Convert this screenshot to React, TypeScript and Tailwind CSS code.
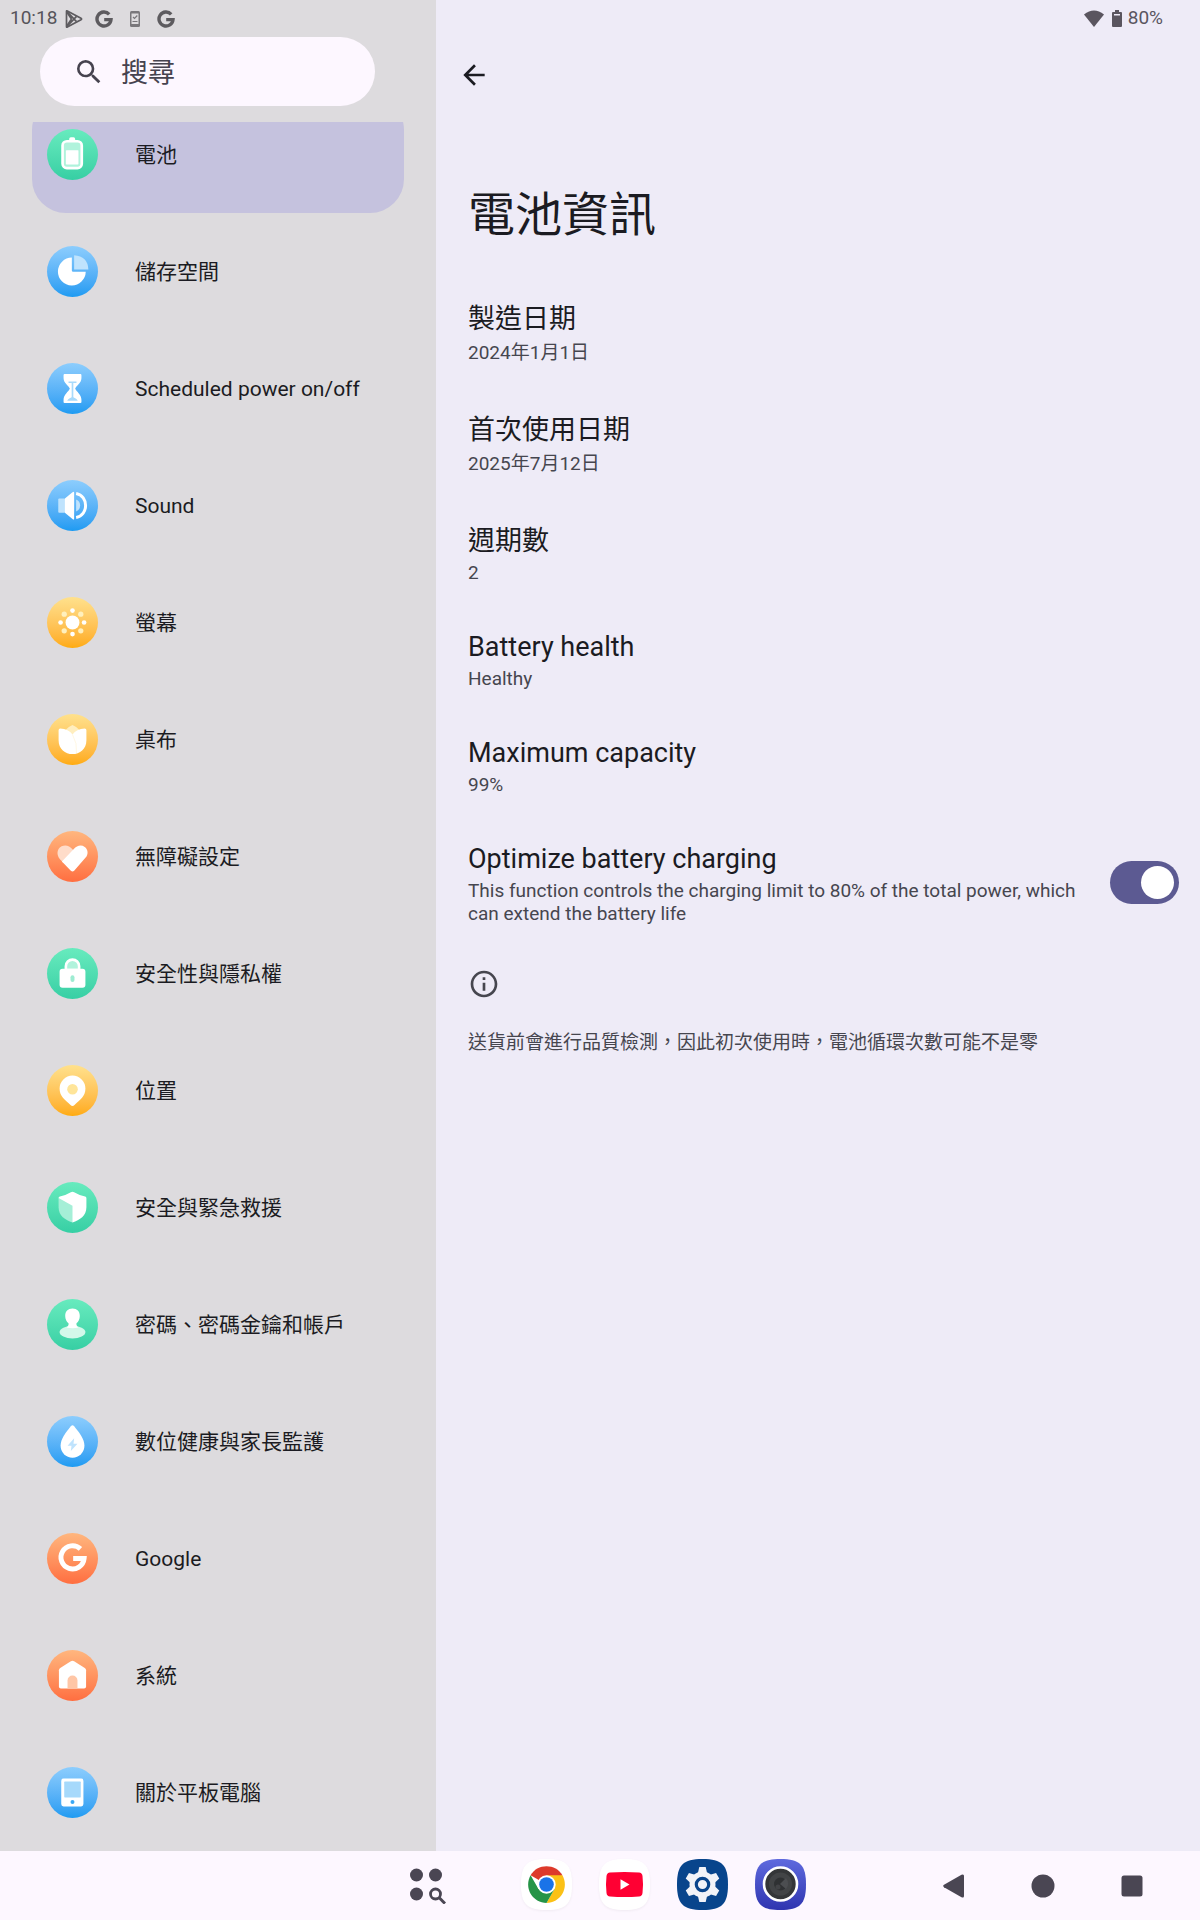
import React, { useState } from 'react';
import { MdArrowBack, MdOutlineInfo, MdSearch } from 'react-icons/md';

type Tone = 'green' | 'blue' | 'yellow' | 'orange';

interface MenuItem {
    label: string;
    tone: Tone;
    icon: React.ReactNode;
    active?: boolean;
}

interface InfoItem {
    title: string;
    value: string;
    tall?: boolean;
}

const tones: Record<Tone, string> = {
    green: 'bg-linear-to-b from-[#67ebbe] to-[#36cfa4]',
    blue: 'bg-linear-to-b from-[#8ccdfd] to-[#1c9bf2]',
    yellow: 'bg-linear-to-b from-[#ffe18c] to-[#ffab0a]',
    orange: 'bg-linear-to-b from-[#ffb67e] to-[#ff6e40]',
};

const menu: MenuItem[] = [
    {
        label: '電池',
        tone: 'green',
        active: true,
        icon: (
            <>
                <rect x="67" y="25" width="18" height="12" rx="5" />
                <rect x="47" y="37" width="58" height="81" rx="13" fill="#b0f3dc" stroke="#fff" strokeWidth="8" />
                <rect x="57" y="64" width="38" height="43" rx="2" />
            </>
        ),
    },
    {
        label: '儲存空間',
        tone: 'blue',
        icon: (
            <>
                <path d="M75 35a42 42 0 1 0 42 43H79q-4 0-4-4z" />
                <path d="M82 28q41 3 43 43H82z" fill="#bfe3fd" />
            </>
        ),
    },
    {
        label: 'Scheduled power on/off',
        tone: 'blue',
        icon: (
            <>
                <path d="M53 33h48q3 0 3 4v8c0 16-15 22-19 32 4 10 19 18 19 34v7q0 3-3 3H53q-3 0-3-3v-7c0-16 15-24 19-34-4-10-19-16-19-32v-8q0-4 3-4z" />
                <path d="M65 58h24M77 58v48" stroke="#a8dafb" strokeWidth="5" fill="none" />
                <path d="M61 114c3-7 12-8 16-12 4 4 13 5 16 12z" fill="#a8dafb" />
            </>
        ),
    },
    {
        label: 'Sound',
        tone: 'blue',
        icon: (
            <>
                <rect x="34" y="56" width="21" height="43" rx="3" fill="#bfe3fd" />
                <path d="M54 56l23-19q5-4 5 2v77q0 6-5 2L54 99z" />
                <path d="M88 59q12 5 12 18t-12 18z" fill="#bfe3fd" />
                <path d="M88 41c38 7 38 65 0 72" stroke="#fff" strokeWidth="9" fill="none" />
            </>
        ),
    },
    {
        label: '螢幕',
        tone: 'yellow',
        icon: (
            <>
                <circle cx="77" cy="77" r="21" />
                <circle cx="77" cy="41" r="7" />
                <circle cx="112" cy="77" r="7" />
                <circle cx="77" cy="112" r="7" />
                <circle cx="41" cy="77" r="7" />
                <g fill="#fff0bd">
                    <circle cx="52" cy="52" r="8" />
                    <circle cx="102" cy="52" r="8" />
                    <circle cx="52" cy="102" r="8" />
                    <circle cx="102" cy="102" r="8" />
                </g>
            </>
        ),
    },
    {
        label: '桌布',
        tone: 'yellow',
        icon: (
            <>
                <path d="M54 50q10-12 23-17 13 5 23 17L77 70z" fill="#ffeebf" />
                <path d="M35 49q0-5 5-5 25 2 37 18 12-16 37-18 5 0 5 5v30c0 27-20 42-42 42S35 106 35 79z" />
                <path d="M77 62q15 26 12 56" stroke="#fff3d4" strokeWidth="2" fill="none" />
            </>
        ),
    },
    {
        label: '無障礙設定',
        tone: 'orange',
        icon: (
            <>
                <path d="M45 91c-18-14-17-37-1-45 13-6 24-1 33 9l8 12-36 30z" fill="#ffdcc9" />
                <path d="M45 92l36-38c9-10 22-14 33-6 11 8 11 24 2 33l-34 39q-5 5-10 0z" />
            </>
        ),
    },
    {
        label: '安全性與隱私權',
        tone: 'green',
        icon: (
            <>
                <path d="M57 67V55a20 20 0 0 1 40 0v12z" fill="#b0f3dc" stroke="#fff" strokeWidth="8" />
                <rect x="38" y="63" width="78" height="57" rx="9" />
                <rect x="71" y="82" width="12" height="21" rx="6" fill="#9eecd2" />
            </>
        ),
    },
    {
        label: '位置',
        tone: 'yellow',
        icon: (
            <>
                <path d="M77 32a39 39 0 0 1 39 39c0 24-16 33-33 50q-6 6-12 0C54 104 38 95 38 71a39 39 0 0 1 39-39z" />
                <circle cx="77" cy="73" r="16" fill="#ffe599" />
            </>
        ),
    },
    {
        label: '安全與緊急救援',
        tone: 'green',
        icon: (
            <>
                <path d="M72 31q5-3 10 0 15 9 33 13 4 1 4 5v27c0 27-20 38-42 46L35 48q0-3 4-4 18-4 33-13z" />
                <path d="M35 48l42 24v50C55 114 35 103 35 76z" fill="#a5efd7" />
            </>
        ),
    },
    {
        label: '密碼、密碼金鑰和帳戶',
        tone: 'green',
        icon: (
            <>
                <ellipse cx="77" cy="100" rx="39" ry="19" fill="#d3f8ea" />
                <path d="M77 29c14 0 22 9 22 22 0 10-4 17-10 22v5q1 5 6 8-18 5-36 0 5-3 6-8v-5c-6-5-10-12-10-22 0-13 8-22 22-22z" />
            </>
        ),
    },
    {
        label: '數位健康與家長監護',
        tone: 'blue',
        icon: (
            <>
                <path d="M72 31q5-6 10 0c14 17 31 38 31 59a36 36 0 0 1-72 0c0-21 17-42 31-59z" />
                <path d="M82 67L62 90h12l-2 16 20-22H80z" fill="#bfe3fd" />
            </>
        ),
    },
    {
        label: 'Google',
        tone: 'orange',
        icon: <path d="M101 48a35 35 0 1 0 11 29H79" stroke="#fff" strokeWidth="15" fill="none" />,
    },
    {
        label: '系統',
        tone: 'orange',
        icon: (
            <>
                <path d="M72 34q5-3 10 0l32 20q4 3 4 7v49q0 6-6 6H42q-6 0-6-6V61q0-4 4-7z" />
                <path d="M62 116V92a15 15 0 0 1 30 0v24z" fill="#ffc6a6" />
            </>
        ),
    },
    {
        label: '關於平板電腦',
        tone: 'blue',
        icon: (
            <>
                <rect x="43" y="35" width="67" height="84" rx="7" />
                <rect x="52" y="44" width="50" height="48" rx="2" fill="#a6d9fb" />
                <circle cx="77" cy="106" r="6" fill="#3ba8f5" />
            </>
        ),
    },
];

const info: InfoItem[] = [
    { title: '製造日期', value: '2024年1月1日', tall: true },
    { title: '首次使用日期', value: '2025年7月12日', tall: true },
    { title: '週期數', value: '2' },
    { title: 'Battery health', value: 'Healthy' },
    { title: 'Maximum capacity', value: '99%' },
];

const GoogleMark: React.FC = () => (
    <svg viewBox="0 0 18 18" className="size-[18px]" fill="none" stroke="#5d5b5f" strokeWidth="3.4">
        <path d="M14.2 4.3a7 7 0 1 0 1.8 5.3H9.2" />
    </svg>
);

const StatusIcons: React.FC = () => (
    <div className="flex items-center">
        <svg viewBox="0 0 18 18" className="size-[18px]" fill="none" stroke="#5d5b5f" strokeWidth="1.7" strokeLinejoin="round">
            <path d="M1.5 1.2v15.6q0 .8.8.3L16 9.8q1.2-.8 0-1.6L2.3.9q-.8-.5-.8.3z" />
            <path d="M1.8 1.3l9.7 10.3M1.8 16.7l9.7-10.3M6.5 9L1.8 16M6.5 9L1.8 2" />
        </svg>
        <div className="ml-3">
            <GoogleMark />
        </div>
        <svg viewBox="0 0 12 18" className="ml-4 h-[18px] w-3">
            <rect x="1" y="1" width="10" height="16" rx="1.5" fill="#79777b" />
            <rect x="2.5" y="3.5" width="7" height="10.5" fill="#dddbde" />
            <path d="M4 7l1.5 1.5 2.8-3M3.5 11.5h5" stroke="#79777b" strokeWidth="1.2" fill="none" />
        </svg>
        <div className="ml-4">
            <GoogleMark />
        </div>
    </div>
);

const Sidebar: React.FC = () => (
    <aside className="w-[436px] shrink-0 bg-[#dddbde]">
        <div className="flex h-[37px] items-center gap-2 pl-2.5 text-[19px] text-[#56545a]">
            <span>10:18</span>
            <StatusIcons />
        </div>
        <label className="mr-[61px] ml-10 flex h-[69px] items-center gap-4 rounded-full bg-[#fdf7ff] pl-[33px] text-[#46434f]">
            <MdSearch className="size-8 shrink-0" />
            <input
                type="search"
                aria-label="搜尋"
                placeholder="搜尋"
                className="w-full min-w-0 bg-transparent pt-1 text-[27px] outline-none placeholder:text-[#46434f]"
            />
        </label>
        <nav className="mt-4 overflow-hidden">
            {/* scrolled a little past the first row */}
            <ul className="-mt-[26px] px-8">
                {menu.map((item) => (
                    <li key={item.label}>
                        <a
                            href="#"
                            className={`flex h-[117px] items-center gap-[37px] rounded-[34px] pl-[15px] ${item.active ? 'bg-[#c5c2de]' : ''}`}
                        >
                            <span className={`size-[51px] shrink-0 rounded-full ${tones[item.tone]}`}>
                                <svg viewBox="0 0 154 154" fill="#fff" className="size-full">
                                    {item.icon}
                                </svg>
                            </span>
                            <span className="pt-[3px] text-[21px] text-[#1b1b22]">{item.label}</span>
                        </a>
                    </li>
                ))}
            </ul>
        </nav>
    </aside>
);

const BatteryInfo: React.FC = () => {
    const [optimize, setOptimize] = useState(true);

    return (
        <main className="min-w-0 flex-1 bg-[#eeebf7] text-[#1b1b22]">
            <div className="flex h-[37px] items-center justify-end pr-[37px] text-[19px] text-[#5a555f]">
                <svg viewBox="0 0 20 17" className="h-[17px] w-5" fill="currentColor">
                    <path d="M10 17L0 4.5q10-8 20 0z" />
                </svg>
                <svg viewBox="0 0 10 17" className="mr-1.5 ml-2 h-[17px] w-2.5" fill="currentColor">
                    <path d="M3 0h4v2h2q1 0 1 1v13q0 1-1 1H1q-1 0-1-1V3q0-1 1-1h2z" />
                    <path d="M2 4h6v1.5H2z" fill="#eeebf7" />
                </svg>
                <span>80%</span>
            </div>
            <button type="button" aria-label="返回" className="mt-[22px] ml-[22px] block">
                <MdArrowBack className="size-8" />
            </button>
            <div className="pr-[21px] pl-8">
                <h1 className="mt-24 text-[47px] leading-[56px]">電池資訊</h1>
                <dl className="mt-15 flex flex-col gap-[47px]">
                    {info.map((item) => (
                        <div key={item.title}>
                            <dt className="text-[27px] leading-8">{item.title}</dt>
                            <dd className={`mt-1 text-[19px] text-[#46464f] ${item.tall ? 'leading-7' : 'leading-[23px]'}`}>
                                {item.value}
                            </dd>
                        </div>
                    ))}
                </dl>
                <label className="mt-[47px] flex items-start gap-[27px]">
                    <span className="flex-1">
                        <span className="block text-[27px] leading-8">Optimize battery charging</span>
                        <span className="mt-1 block text-[19px] leading-[23px] text-[#46464f]">
                            This function controls the charging limit to 80% of the total power, which can extend the battery life
                        </span>
                    </span>
                    <input
                        type="checkbox"
                        role="switch"
                        checked={optimize}
                        onChange={(e) => setOptimize(e.target.checked)}
                        className="mt-[18px] flex h-[43px] w-[69px] shrink-0 appearance-none items-center rounded-full bg-[#a09ea8] px-[5px] before:size-[33px] before:rounded-full before:bg-white checked:justify-end checked:bg-[#5c5a92]"
                    />
                </label>
                <MdOutlineInfo className="mt-[43px] size-8 text-[#46464f]" />
                <p className="mt-[29px] text-[19px] leading-7 text-[#46464f]">
                    送貨前會進行品質檢測，因此初次使用時，電池循環次數可能不是零
                </p>
            </div>
        </main>
    );
};

const squircle = 'M25.5 0C45 0 51 6 51 25.5S45 51 25.5 51 0 45 0 25.5 6 0 25.5 0z';
const cog = 'M22.3 8h6.4l1.6 7v21l-1.6 7h-6.4l-1.6-7V15z';

const Taskbar: React.FC = () => (
    <footer className="flex h-[69px] items-center bg-[#fdf7ff] pr-14 pl-[34%]">
        <button type="button" aria-label="所有應用程式" className="pb-0.5">
            <svg viewBox="0 0 38 38" className="size-[38px]" fill="#4a4653">
                <circle cx="8.5" cy="9" r="6.5" />
                <circle cx="27.5" cy="9" r="6.5" />
                <circle cx="8.5" cy="28" r="6.5" />
                <circle cx="27.5" cy="28" r="5" fill="none" stroke="#4a4653" strokeWidth="2.8" />
                <path d="M31 31.5l6 6" stroke="#4a4653" strokeWidth="3" />
            </svg>
        </button>
        <div className="ml-[75px] flex gap-[27px] pb-0.5">
            <button type="button" aria-label="Chrome">
                <svg viewBox="0 0 51 51" className="size-[51px] drop-shadow-xs">
                    <path d={squircle} fill="#fff" />
                    <path d="M25.5 25.5L9.6 16.3a18.4 18.4 0 0 1 31.8 0z" fill="#dd3a2b" />
                    <path d="M25.5 16.3h15.9a18.4 18.4 0 0 1-15.9 27.6l8-13.8z" fill="#fbc116" />
                    <path d="M33.5 30.1l-8 13.8A18.4 18.4 0 0 1 9.6 16.3l7.9 13.8z" fill="#259447" />
                    <circle cx="25.5" cy="25.5" r="9.2" fill="#fff" />
                    <circle cx="25.5" cy="25.5" r="7.3" fill="#1a73e8" />
                </svg>
            </button>
            <button type="button" aria-label="YouTube">
                <svg viewBox="0 0 51 51" className="size-[51px] drop-shadow-xs">
                    <path d={squircle} fill="#fff" />
                    <path d="M11 13.5q14.5-1 29 0 3 .3 3.5 3.5 1 8.5 0 17-.5 3.2-3.5 3.5-14.5 1-29 0-3-.3-3.5-3.5-1-8.5 0-17 .5-3.2 3.5-3.5z" fill="#ff0033" />
                    <path d="M21.5 20.2v10.6l9-5.3z" fill="#fff" />
                </svg>
            </button>
            <button type="button" aria-label="設定">
                <svg viewBox="0 0 51 51" className="size-[51px]">
                    <path d={squircle} fill="#08458c" />
                    <g fill="#f1f3f8">
                        <circle cx="25.5" cy="25.5" r="13" />
                        <path d={cog} />
                        <path d={cog} transform="rotate(60 25.5 25.5)" />
                        <path d={cog} transform="rotate(120 25.5 25.5)" />
                    </g>
                    <circle cx="25.5" cy="25.5" r="6.2" fill="#f1f3f8" stroke="#08458c" strokeWidth="3.2" />
                </svg>
            </button>
            <button type="button" aria-label="相機">
                <svg viewBox="0 0 51 51" className="size-[51px]">
                    <defs>
                        <linearGradient id="camera" x1="0" y1="0" x2="0" y2="1">
                            <stop offset="0" stopColor="#5f6ade" />
                            <stop offset="1" stopColor="#2f35b0" />
                        </linearGradient>
                    </defs>
                    <path d={squircle} fill="url(#camera)" />
                    <circle cx="25.5" cy="25" r="16.5" fill="#343638" stroke="#fff" strokeWidth="2.6" />
                    <circle cx="25.5" cy="25" r="11.5" fill="#424446" />
                    <circle cx="25.5" cy="25" r="6.5" fill="#2f3133" />
                    <path d="M25 25l6-6a9 9 0 0 1 0 11z" fill="#4c4e51" />
                    <circle cx="23" cy="28" r="2.5" fill="#424346" />
                </svg>
            </button>
        </div>
        <div className="ml-auto flex gap-[65px] text-[#4a4653]">
            <button type="button" aria-label="上一頁">
                <svg viewBox="0 0 24 24" className="size-6" fill="currentColor">
                    <path d="M19.5.8q2.5-1.2 2.5 1.2v20q0 2.4-2.5 1.2L2 13.2q-1.6-1.2 0-2.4z" />
                </svg>
            </button>
            <button type="button" aria-label="首頁">
                <svg viewBox="0 0 24 24" className="size-6" fill="currentColor">
                    <circle cx="12" cy="12" r="11.5" />
                </svg>
            </button>
            <button type="button" aria-label="最近">
                <svg viewBox="0 0 24 24" className="size-6" fill="currentColor">
                    <rect x="1.5" y="1.5" width="21" height="21" rx="2.5" />
                </svg>
            </button>
        </div>
    </footer>
);

const App: React.FC = () => {
    return (
        <div lang="zh-Hant" className="flex min-h-screen flex-col font-['Roboto','Noto_Sans_CJK_TC',sans-serif]">
            <div className="flex flex-1">
                <Sidebar />
                <BatteryInfo />
            </div>
            <Taskbar />
        </div>
    );
};

export default App;
